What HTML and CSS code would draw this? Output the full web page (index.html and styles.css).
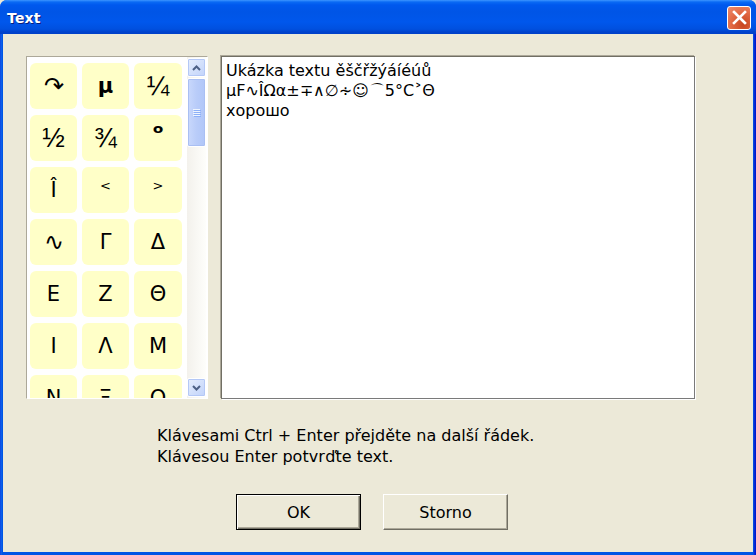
FILE: index.html
```html
<!DOCTYPE html>
<html lang="cs">
<head>
<meta charset="utf-8">
<title>Text</title>
<link rel="stylesheet" href="styles.css">
</head>
<body>
<div class="window">
  <div class="titlebar">
    <span class="title">Text</span>
    <button class="close" aria-label="Zavřít">
      <svg width="15" height="15" viewBox="0 0 15 15"><path d="M2 2 L13 13 M13 2 L2 13" stroke="#fff" stroke-width="2.6" stroke-linecap="square"/></svg>
    </button>
  </div>
  <div class="client">
    <div class="panes">
      <div class="symbols">
        <div class="grid">
          <div class="sym thin">↷</div><div class="sym bold">µ</div><div class="sym frac">¼</div>
          <div class="sym frac">½</div><div class="sym frac">¾</div><div class="sym deg">ᵒ</div>
          <div class="sym">Î</div><div class="sym small">&lt;</div><div class="sym small">&gt;</div>
          <div class="sym thin">∿</div><div class="sym">Γ</div><div class="sym">Δ</div>
          <div class="sym">Ε</div><div class="sym">Ζ</div><div class="sym">Θ</div>
          <div class="sym">Ι</div><div class="sym">Λ</div><div class="sym">Μ</div>
          <div class="sym">Ν</div><div class="sym">Ξ</div><div class="sym">Ο</div>
        </div>
        <div class="scrollbar">
          <div class="sb-btn"><svg width="9" height="6" viewBox="0 0 9 6"><path d="M1 5 L4.5 1.5 L8 5" fill="none" stroke="#4D6185" stroke-width="2"/></svg></div>
          <div class="sb-thumb"><span></span><span></span><span></span><span></span></div>
          <div class="sb-track"></div>
          <div class="sb-btn"><svg width="9" height="6" viewBox="0 0 9 6"><path d="M1 1 L4.5 4.5 L8 1" fill="none" stroke="#4D6185" stroke-width="2"/></svg></div>
        </div>
      </div>
      <div class="editor">
        <div>Ukázka textu ěščřžýáíéúů</div>
        <div>µF∿ÎΩα±∓∧∅∻☺⌒5°C˃Θ</div>
        <div>хорошо</div>
      </div>
    </div>
    <div class="hint">
      <div>Klávesami Ctrl + Enter přejděte na další řádek.</div>
      <div>Klávesou Enter potvrďte text.</div>
    </div>
    <div class="buttons">
      <button class="btn default">OK</button>
      <button class="btn">Storno</button>
    </div>
  </div>
</div>
</body>
</html>
```
FILE: styles.css
```css
html, body { margin: 0; padding: 0; }
body { width: 756px; height: 555px; overflow: hidden; background: #ECE9D8; }

.window {
  width: 756px;
  height: 555px;
  box-sizing: border-box;
  display: flex;
  flex-direction: column;
  background: linear-gradient(to right, #0831D9 0, #166AEE 1px, #0055E5 2px, #0055E5 753px, #0B3ED9 754px, #0019CF 755px);
  border-radius: 7px 7px 0 0;
  font-family: "DejaVu Sans", Tahoma, sans-serif;
}

.titlebar {
  height: 34px;
  flex: none;
  display: flex;
  align-items: center;
  justify-content: space-between;
  padding: 0 5px 0 7px;
  border-radius: 7px 7px 0 0;
  background: linear-gradient(to bottom, #3D95FF 0, #0A6AF4 2px, #0058EE 5px, #0055E6 12px, #0057EC 22px, #0050DF 29px, #0042CC 32px, #0040C8 34px);
}

.title {
  color: #fff;
  font-weight: bold;
  font-size: 14px;
  letter-spacing: 0.2px;
  text-shadow: 1px 1px 0 #0A1E7A;
  margin-top: 1px;
}

.close {
  width: 24px;
  height: 24px;
  padding: 0;
  margin-top: 1px;
  border: 1px solid #fff;
  border-radius: 3px;
  background: radial-gradient(circle at 70% 80%, #C7441E 0, #E36B46 55%, #EE8C6E 100%);
  display: flex;
  align-items: center;
  justify-content: center;
}

.client {
  flex: 1;
  margin: 0 3px 3px 3px;
  background: #ECE9D8;
  display: flex;
  flex-direction: column;
  padding: 22px 0 0 23px;
}

.panes {
  display: flex;
  gap: 13px;
  height: 343px;
}

.symbols {
  width: 182px;
  box-sizing: border-box;
  border: 1px solid #ACA899;
  border-right-color: #fff;
  border-bottom-color: #fff;
  background: #fff;
  display: flex;
  padding: 0 1px 0 0;
}

.grid {
  flex: 1;
  display: grid;
  grid-template-columns: 47px 47px 48px;
  grid-auto-rows: 46px;
  column-gap: 5px;
  row-gap: 6px;
  padding: 6px 0 0 3px;
  overflow: hidden;
  height: 341px;
  box-sizing: border-box;
}

.sym {
  background: #FFFFC8;
  border-radius: 6px;
  display: flex;
  align-items: center;
  justify-content: center;
  font-size: 21px;
  color: #000;
}
.sym.bold { font-weight: bold; }
.sym.thin { font-family: "DejaVu Sans", sans-serif; font-weight: 200; font-size: 24px; }
.sym.frac { font-family: "Liberation Sans", sans-serif; font-size: 27px; }
.sym.deg { font-size: 24px; font-weight: bold; padding-bottom: 10px; box-sizing: border-box; }
.sym.small { font-size: 13px; padding-bottom: 10px; box-sizing: border-box; }

.scrollbar {
  width: 19px;
  flex: none;
  display: flex;
  flex-direction: column;
  background: linear-gradient(to right, #F3F1EC, #FEFEFB);
  padding: 1px 0;
  box-sizing: border-box;
}

.sb-btn {
  height: 19px;
  flex: none;
  border: 1px solid #fff;
  border-radius: 2px;
  background: linear-gradient(to bottom right, #E6EEFC, #C1D3FB);
  box-shadow: inset 0 0 0 1px #B4C8F6;
  display: flex;
  align-items: center;
  justify-content: center;
  box-sizing: border-box;
}

.sb-thumb {
  height: 69px;
  flex: none;
  margin-top: 1px;
  border: 1px solid #fff;
  border-radius: 2px;
  background: linear-gradient(to right, #C9D8FC, #B9CCF9 50%, #B0C6F8);
  box-shadow: inset 0 0 0 1px #A9BFF3;
  box-sizing: border-box;
  display: flex;
  flex-direction: column;
  align-items: center;
  justify-content: center;
  gap: 1px;
}
.sb-thumb span { width: 7px; height: 1px; background: #EEF4FE; box-shadow: 1px 1px 0 #8CB0F8; }

.sb-track { flex: 1; }

.editor {
  width: 474px;
  box-sizing: border-box;
  border: 1px solid #7A7A7A;
  border-top-color: #716F64;
  border-left-color: #716F64;
  box-shadow: 1px 1px 0 #fff, -1px -1px 0 #ACA899;
  background: #fff;
  padding: 4px 4px;
  font-size: 16px;
  line-height: 20px;
  color: #000;
}

.hint {
  margin: 26px 0 0 131px;
  font-size: 16px;
  line-height: 21px;
  color: #000;
}

.buttons {
  display: flex;
  gap: 22px;
  margin: 27px 0 0 210px;
}

.btn {
  width: 125px;
  height: 36px;
  box-sizing: border-box;
  background: #ECE9D8;
  border: 1px solid;
  border-color: #fff #716F64 #716F64 #fff;
  box-shadow: inset -1px -1px 0 #ACA899;
  font-family: "DejaVu Sans", Tahoma, sans-serif;
  font-size: 16px;
  color: #000;
  padding: 0;
}
.btn.default {
  border: 1px solid #000;
  box-shadow: inset 1px 1px 0 #fff, inset -1px -1px 0 #716F64, inset -2px -2px 0 #ACA899;
}
```
